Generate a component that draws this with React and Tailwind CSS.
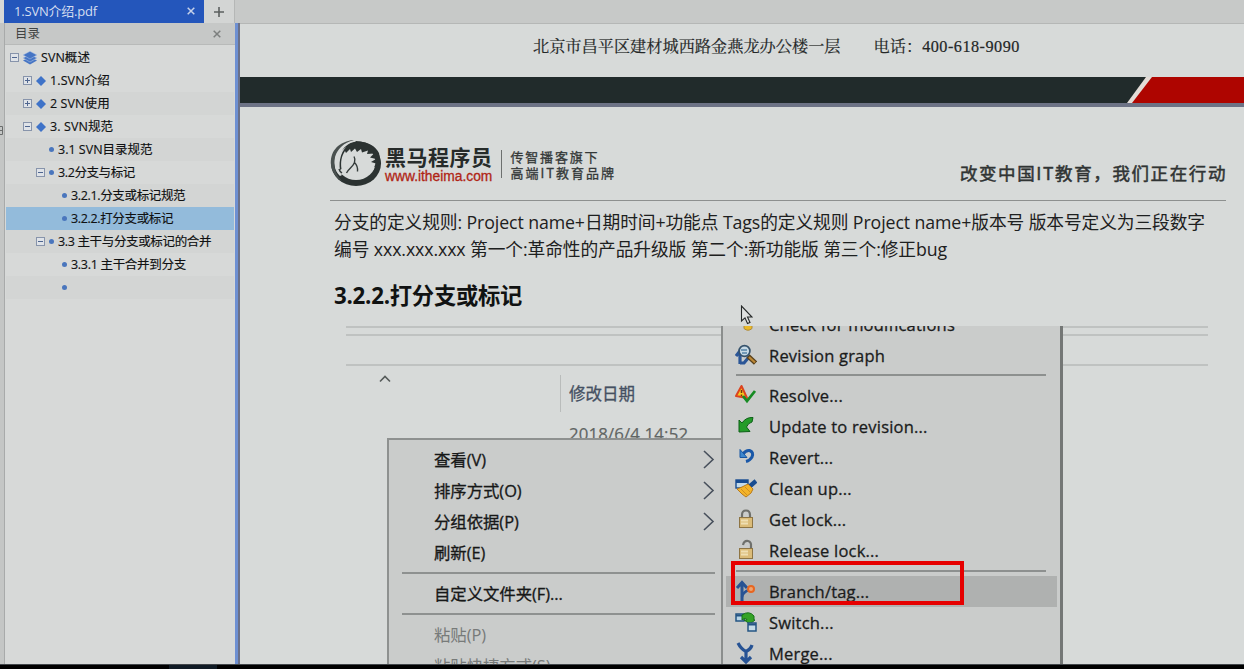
import React from 'react';

const SANS = "font-['Open_Sans','Noto_Sans_CJK_SC',sans-serif]";

function Expander({ open }) {
  return (
    <svg width="9" height="9" viewBox="0 0 9 9" className="shrink-0" fill="none">
      <rect x="0.5" y="0.5" width="8" height="8" fill="#dfe3e8" stroke="#8794ab" />
      <path d="M2 4.5H7" stroke="#4f6690" />
      {!open && <path d="M4.5 2V7" stroke="#4f6690" />}
    </svg>
  );
}

function Layers() {
  return (
    <svg width="14" height="14" viewBox="0 0 14 14" className="ml-[4px] shrink-0">
      <path d="M0 9.5L7 6L14 9.5L7 13.5Z" fill="#4675c4" />
      <path d="M0 7L7 3.5L14 7L7 11Z" fill="#4675c4" stroke="#b9cae6" strokeWidth=".5" />
      <path d="M0 4L7 0.3L14 4L7 8Z" fill="#4675c4" stroke="#b9cae6" strokeWidth=".5" />
    </svg>
  );
}

function Diamond() {
  return (
    <svg width="10" height="10" viewBox="0 0 10 10" className="ml-[4px] shrink-0">
      <path d="M5 0L10 5L5 10L0 5Z" fill="#3f73c8" />
    </svg>
  );
}

function Dot() {
  return <span className="size-[5px] shrink-0 rounded-full bg-[#4a76bd]" />;
}

const tree = [
  { text: 'SVN概述', pad: 'pl-[4px]', icon: 'layers', open: true, track: 'tracking-[0.05px]' },
  { text: '1.SVN介绍', pad: 'pl-[17px]', icon: 'diamond', open: false, track: 'tracking-[0.1px]' },
  { text: '2 SVN使用', pad: 'pl-[17px]', icon: 'diamond', open: false, track: 'tracking-[0.1px]' },
  { text: '3. SVN规范', pad: 'pl-[17px]', icon: 'diamond', open: true, track: 'tracking-[0.1px]' },
  { text: '3.1 SVN目录规范', pad: 'pl-[43px]', icon: 'dot', track: 'tracking-[0px]' },
  { text: '3.2分支与标记', pad: 'pl-[30px]', icon: 'dot', open: true, track: 'tracking-[-0.4px]' },
  { text: '3.2.1.分支或标记规范', pad: 'pl-[56px]', icon: 'dot', track: 'tracking-[-0.35px]' },
  { text: '3.2.2.打分支或标记', pad: 'pl-[56px]', icon: 'dot', selected: true, track: 'tracking-[-0.35px]' },
  { text: '3.3 主干与分支或标记的合并', pad: 'pl-[30px]', icon: 'dot', open: true, track: 'tracking-[-0.35px]' },
  { text: '3.3.1 主干合并到分支', pad: 'pl-[56px]', icon: 'dot', track: 'tracking-[-0.3px]' },
  { text: '', pad: 'pl-[56px]', icon: 'dot', track: '' },
];

function TreeRow({ item, index }) {
  const bg = item.selected ? 'bg-[#93bbdb]' : index % 2 === 0 && index > 0 ? 'bg-[#d3d5d4]' : 'bg-[#d7d9d8]';
  return (
    <div className={`flex h-[23px] items-center ${item.pad} ${bg}`}>
      {item.open !== undefined && <Expander open={item.open} />}
      {item.open !== undefined && item.icon === 'dot' && <span className="w-[4px]" />}
      {item.icon === 'layers' && <Layers />}
      {item.icon === 'diamond' && <Diamond />}
      {item.icon === 'dot' && <Dot />}
      <span className={`ml-[4px] whitespace-nowrap text-[12.5px] leading-[23px] text-[#101112] [-webkit-text-stroke:0.15px_#101112] ${item.track}`}>
        {item.text}
      </span>
    </div>
  );
}

function Close({ color }) {
  return (
    <svg width="8" height="8" viewBox="0 0 8 8" fill="none" stroke={color} strokeWidth="1.5">
      <path d="M0.7 0.7L7.3 7.3M7.3 0.7L0.7 7.3" />
    </svg>
  );
}

function HorseLogo() {
  return (
    <svg width="52" height="50" viewBox="0 0 52 50" className="shrink-0">
      <ellipse cx="26" cy="24.500" rx="25" ry="22.500" fill="#2b3231" />
      <ellipse cx="26" cy="23.500" rx="19.500" ry="17.500" fill="#d7dad9" />
      <path d="M24 1C9 4 3 14 4.500 26C5 31 7 34 10 37L12 36C8 31 7.500 22 10.500 15C13.500 8 18 4 26 2.500Z" fill="#d7dad9" />
      <path d="M22 1C6 4 0 14 1 26C2 33 6 39 12 42C5 35 3 26 5 18C7.500 10 13 4 24 1Z" fill="#4a5150" />
      <path d="M10 31C8.500 22 11 10 20 5C30 0 44 4 49 14L51 25L44 28L46 24.500L41 23L46 20L40 18.500L44 14.500L37 15L38 11.500L32 13.500L31 10L27 13L25 9.500L21 13L20 10L16 14L15 12C11.500 17 10.500 23 11.500 30Z" fill="#2b3231" />
      <path d="M9 30C9.500 32 10.500 33 12 34M24 17.500C25.500 20 25 22 24.500 23.500C23 28 19 29 16.500 34M24.500 23.500C27 26 28 28 27.500 32.500" fill="none" stroke="#343b3a" strokeWidth="1.4" />
    </svg>
  );
}

const icons = {
  check: <path d="M9 2H17V15.500Q13 19 9 15.500Z" fill="#e9b928" stroke="#b08a36" />,
  graph: (
    <>
      <path d="M5 20V8M1 12L5 7L9 11M5 19H9L14 13" fill="none" stroke="#2b5697" strokeWidth="3.2" />
      <path d="M13 12L20.500 19" stroke="#58401b" strokeWidth="4.6" />
      <path d="M14 13L20 18.500" stroke="#bd8836" strokeWidth="2.2" />
      <circle cx="9.5" cy="7" r="5.4" fill="#c6d9e5" stroke="#36536d" strokeWidth="1.7" />
      <path d="M6 6H12M7 9H12" stroke="#5784a8" strokeWidth="1.4" />
    </>
  ),
  resolve: (
    <>
      <path d="M6.5 2L12 14L1 12Z" fill="#f4cb22" stroke="#dc431f" strokeWidth="2" strokeLinejoin="round" />
      <path d="M6.5 6V9M6.5 10.5V12" stroke="#74320d" strokeWidth="1.5" />
      <path d="M8 12L12 17L20 7" fill="none" stroke="#168b23" strokeWidth="2.8" />
    </>
  ),
  update: <path d="M4 5L7 8Q11 2 18 2.500L17 7Q13 8 11.500 12L15 16.500L4 17Z" fill="#249c29" stroke="#0c6117" />,
  revert: (
    <>
      <path d="M8 8Q11 4 14.500 4.500Q19 6 17 11Q15 14.500 11 15.500" fill="none" stroke="#1a58a8" strokeWidth="3" />
      <path d="M5 3.500V11.500H12Z" fill="#3d87ce" stroke="#1656a2" />
    </>
  ),
  clean: (
    <>
      <rect x="1" y="3" width="12" height="8" fill="#c3dbeb" stroke="#174c91" strokeWidth="1.4" />
      <path d="M1 4.5H13" stroke="#174c91" strokeWidth="3" />
      <path d="M14 10L21 4" stroke="#174c91" strokeWidth="4.4" />
      <path d="M2 12L7 10L13 7L18 12L16 16L11 20L7 17Z" fill="#f4b42a" stroke="#b77a1c" />
      <path d="M6 12L12 18M10 10L15 15" stroke="#d08f20" />
    </>
  ),
  lock: (
    <>
      <path d="M7 11V7Q7 2.500 11 2.500Q15 2.500 15 7V11" fill="none" stroke="#6f706c" strokeWidth="2.2" />
      <rect x="4.5" y="9.500" width="13" height="10" fill="#dbbc79" stroke="#8e7544" />
      <path d="M6 12.5H13M6 15.5H13" stroke="#efdfb3" strokeWidth="2" />
    </>
  ),
  unlock: (
    <>
      <path d="M8 6Q9 1.500 13 2Q16.500 3 16 7V11" fill="none" stroke="#6f706c" strokeWidth="2.2" />
      <rect x="4.5" y="9.500" width="13" height="10" fill="#dbbc79" stroke="#8e7544" />
      <path d="M6 12.5H13M6 15.5H13" stroke="#efdfb3" strokeWidth="2" />
    </>
  ),
  branch: (
    <>
      <path d="M7 21V3M2 8L7 2.500L12 8" fill="none" stroke="#275394" strokeWidth="3" />
      <path d="M7 17Q8 12 14 10" fill="none" stroke="#275394" strokeWidth="2.4" />
      <circle cx="16" cy="9" r="3" fill="#efa36f" stroke="#e76621" strokeWidth="2" />
    </>
  ),
  sw: (
    <>
      <rect x="1" y="3" width="8" height="7" fill="#b6d4e5" stroke="#245584" strokeWidth="1.5" />
      <path d="M1 4.5H9" stroke="#245584" strokeWidth="2" />
      <path d="M7 4Q14 -1 19 5V9H20L15 13L9 9H12Q11 6 7 9Z" fill="#34a326" stroke="#177118" />
      <rect x="13" y="12" width="8" height="8" fill="#c4dbe7" stroke="#245584" strokeWidth="1.5" />
      <path d="M13 13.5H21" stroke="#245584" strokeWidth="2" />
    </>
  ),
  merge: <path d="M3 1Q6 7 11 9.500Q16 7 17 3M11 9V19M6 15L11 20L16 15" fill="none" stroke="#275394" strokeWidth="3.2" />,
};

const svnItems = [
  { icon: 'check', label: 'Check for modifications' },
  { icon: 'graph', label: 'Revision graph' },
  null,
  { icon: 'resolve', label: 'Resolve...' },
  { icon: 'update', label: 'Update to revision...' },
  { icon: 'revert', label: 'Revert...' },
  { icon: 'clean', label: 'Clean up...' },
  { icon: 'lock', label: 'Get lock...' },
  { icon: 'unlock', label: 'Release lock...' },
  null,
  { icon: 'branch', label: 'Branch/tag...', active: true },
  { icon: 'sw', label: 'Switch...' },
  { icon: 'merge', label: 'Merge...' },
];

function SvnMenu() {
  return (
    <div className="absolute top-0 left-[481px] flex h-[338px] w-[342px] flex-col overflow-hidden border-r-[3px] border-l-2 border-r-[#747776] border-l-[#8b8e8d] bg-[#cacccb] pr-[3px]">
      <div className="-mt-[17px] flex flex-col">
        {svnItems.map((item, i) =>
          item ? (
            <div key={i} className={`ml-[3px] flex h-[31px] items-center pb-px pl-[9px] ${item.active ? 'bg-[#afb1b0]' : ''}`}>
              <svg width="22" height="22" viewBox="0 0 22 22" className="mr-[12px] shrink-0">{icons[item.icon]}</svg>
              <span className="whitespace-nowrap text-[16.5px] leading-[31px] tracking-[0.2px] text-[#1b1c1c] [-webkit-text-stroke:0.3px_#1b1c1c]">{item.label}</span>
            </div>
          ) : (
            <div key={i} className={`mr-[11px] ml-[13px] flex ${i === 2 ? 'h-[9px] pt-[3px]' : 'h-[10px] pt-[4px]'}`}>
              <div className="h-[2px] w-full bg-[#8d908f]" />
            </div>
          )
        )}
      </div>
    </div>
  );
}

const shellItems = [
  { label: '查看(V)', arrow: true },
  { label: '排序方式(O)', arrow: true },
  { label: '分组依据(P)', arrow: true },
  { label: '刷新(E)' },
  null,
  { label: '自定义文件夹(F)...' },
  null,
  { label: '粘贴(P)', dim: true },
  { label: '粘贴快捷方式(S)', dim: true },
];

function ShellMenu() {
  return (
    <div className="absolute top-[112px] left-[147px] flex h-[226px] w-[335px] flex-col overflow-hidden border-t-2 border-l-2 border-[#8e9190] bg-[#cacccb] pt-[5px]">
      {shellItems.map((item, i) =>
        item ? (
          <div key={i} className="flex h-[31px] shrink-0 items-center justify-between pr-[7px] pb-[2px] pl-[45px]">
            <span className={`whitespace-nowrap text-[16.4px] leading-[31px] tracking-[-0.05px] ${item.dim ? 'text-[#777a79]' : 'text-[#171818] [-webkit-text-stroke:0.3px_#171818]'}`}>{item.label}</span>
            {item.arrow && (
              <svg width="13" height="20" viewBox="0 0 13 20" fill="none" stroke="#48505c" strokeWidth="1.6">
                <path d="M2 1L11 9.5L2 18" />
              </svg>
            )}
          </div>
        ) : (
          <div key={i} className="mr-[7px] ml-[13px] flex h-[10px] shrink-0 pt-[3px]">
            <div className="h-[2px] w-full bg-[#8e9190]" />
          </div>
        )
      )}
    </div>
  );
}

function Explorer() {
  return (
    <div className="relative mt-auto h-[338px] w-full overflow-hidden">
      <div className="ml-[106px] flex w-[862px] flex-col">
        <div className="h-[2px] bg-[#bfc2c1]" />
        <div className="mt-[6px] h-[2px] bg-[#bfc2c1]" />
        <div className="mt-[28px] h-[2px] bg-[#bfc2c1]" />
        <div className="flex">
          <svg width="12" height="8" viewBox="0 0 12 8" className="mt-[9px] ml-[33px]" fill="none" stroke="#565b5a" strokeWidth="1.6">
            <path d="M1 6.5L6 1.5L11 6.5" />
          </svg>
          <div className="mt-[9px] ml-[169px] h-[37px] w-px bg-[#b9bcbb]" />
          <div className="ml-[8px] flex flex-col">
            <span className="mt-[16px] text-[16.5px] leading-[24px] text-[#455062] [-webkit-text-stroke:0.3px_#455062]">修改日期</span>
            <span className="mt-[17px] text-[16.8px] leading-[22px] tracking-[0.15px] text-[#606463] [-webkit-text-stroke:0.2px_#606463]">2018/6/4 14:52</span>
          </div>
        </div>
      </div>
      <ShellMenu />
      <SvnMenu />
      <div className="absolute top-[235px] left-[491px] h-[44px] w-[233px] border-4 border-[#e60000]" />
    </div>
  );
}

export default function App() {
  return (
    <div className={`flex h-[669px] w-[1244px] flex-col overflow-hidden bg-black ${SANS}`}>
      <div className="flex h-[23px] shrink-0 bg-[#c7c9c8]">
        <div className="w-[4px] bg-[#d6d8d7]" />
        <div className="flex w-[200px] items-center justify-between bg-[#2456bb] pr-[9px] pb-[2px] pl-[10px]">
          <span className="text-[13px] leading-[20px] tracking-[-0.2px] text-[#d5def0]">1.SVN介绍.pdf</span>
          <Close color="#c6d2ea" />
        </div>
        <div className="flex w-[31px] items-center justify-center border-r border-[#b5b7b6] bg-[#d3d5d4]">
          <svg width="10" height="10" viewBox="0 0 10 10" stroke="#5c605f" strokeWidth="1.6">
            <path d="M5 0V10M0 5H10" />
          </svg>
        </div>
      </div>
      <div className="flex h-[641px] shrink-0">
        <div className="flex w-[5px] shrink-0 flex-col border-r border-[#a8aaaa] bg-[#c4c6c5] pt-[103px]">
          <svg width="4" height="9" viewBox="0 0 4 9" fill="none" stroke="#6a6d6c">
            <path d="M0 .5H2.500V8.5H0M0 4.5H2.500" />
          </svg>
        </div>
        <div className="flex w-[230px] shrink-0 flex-col bg-[#d7d9d8]">
          <div className="flex h-[22px] shrink-0 items-center justify-between border-b border-[#b8bab9] bg-[#c6c8c7] pr-[14px] pl-[10px]">
            <span className="text-[12.5px] leading-[22px] text-[#414443]">目录</span>
            <Close color="#7c7f7e" />
          </div>
          <div className="mt-px flex flex-col pr-px pl-px">
            {tree.map((item, i) => (
              <TreeRow key={i} item={item} index={i} />
            ))}
          </div>
        </div>
        <div className="w-[5px] shrink-0 border-r-2 border-l-[3px] border-r-[#6b7188] border-l-[#6e90d2]" />
        <div className="flex w-[1004px] flex-col bg-[#d7dad9]">
          <div className="flex h-[54px] shrink-0 items-center border-t border-[#b5b7b6] pb-[7px] pl-[293px] font-['Liberation_Serif','Noto_Serif_CJK_SC','Noto_Sans_CJK_SC',serif] text-[16.2px] text-[#242727] [-webkit-text-stroke:0.2px_#242727]">
            <span className="whitespace-nowrap">北京市昌平区建材城西路金燕龙办公楼一层</span>
            <span className="ml-[33px] whitespace-nowrap">电话：</span>
            <span className="whitespace-nowrap tracking-[0.5px]">400-618-9090</span>
          </div>
          <svg width="1004" height="26" viewBox="0 0 1004 26" className="shrink-0">
            <rect width="1004" height="26" fill="#212b2b" />
            <path d="M906 0L887 26H1004V0Z" fill="#e3dcd7" />
            <path d="M912 0L892 26H1004V0Z" fill="#ae0500" />
          </svg>
          <div className="h-[4px] shrink-0 bg-[#6d7386]" />
          <div className="mr-[18px] ml-[90px] flex h-[94px] shrink-0 items-end justify-between border-b border-[#8d908f] pb-[11px]">
            <div className="flex items-center">
              <HorseLogo />
              <div className="mt-[2px] ml-[3px] flex flex-col">
                <span className="h-[23px] text-[21px] leading-[23px] font-bold tracking-[0.5px] whitespace-nowrap text-[#262b2a]">黑马程序员</span>
                <span className="font-['Liberation_Sans',sans-serif] text-[13.8px] leading-[16px] text-[#b02415] [-webkit-text-stroke:0.3px_#b02415]">www.itheima.com</span>
              </div>
              <div className="ml-[8px] h-[28px] w-px bg-[#6d706f]" />
              <div className="mt-[2px] ml-[9px] flex flex-col font-['Noto_Sans_CJK_SC',sans-serif] text-[13px] leading-[16px] whitespace-nowrap text-[#343838] [-webkit-text-stroke:0.3px_#343838]">
                <span className="h-[16px] tracking-[1.8px]">传智播客旗下</span>
                <span className="h-[16px] tracking-[2px]">高端IT教育品牌</span>
              </div>
            </div>
            <span className="-mr-px mb-[4px] font-['Noto_Sans_CJK_SC',sans-serif] text-[17.5px] leading-[25px] tracking-[1.6px] whitespace-nowrap text-[#303434] [-webkit-text-stroke:0.5px_#303434]">改变中国IT教育，我们正在行动</span>
          </div>
          <div className="mt-[8px] ml-[94px] flex shrink-0 flex-col text-[17.74px] leading-[27px] text-[#1d2020]">
            <span className="whitespace-nowrap tracking-[-0.1px]">分支的定义规则: Project name+日期时间+功能点 Tags的定义规则 Project name+版本号 版本号定义为三段数字</span>
            <span className="whitespace-nowrap tracking-[-0.1px]">编号 xxx.xxx.xxx 第一个:革命性的产品升级版 第二个:新功能版 第三个:修正bug</span>
            <span className="mt-[18px] text-[22.3px] leading-[30px] font-bold tracking-[-0.25px] text-[#101212]">3.2.2.打分支或标记</span>
          </div>
          <Explorer />
        </div>
      </div>
      <div className="flex h-[5px] shrink-0 border-t border-[#42464a] bg-black">
        <div className="ml-[169px] w-[48px] bg-[#101b25]" />
      </div>
      <svg width="13" height="20" viewBox="0 0 13 20" className="absolute top-[305px] left-[740px]">
        <path d="M1.500 1V16L5 12.8L7.500 18.5L10 17.4L7.500 12H12Z" fill="#dfe1e0" stroke="#252828" strokeWidth="1.1" />
      </svg>
    </div>
  );
}
